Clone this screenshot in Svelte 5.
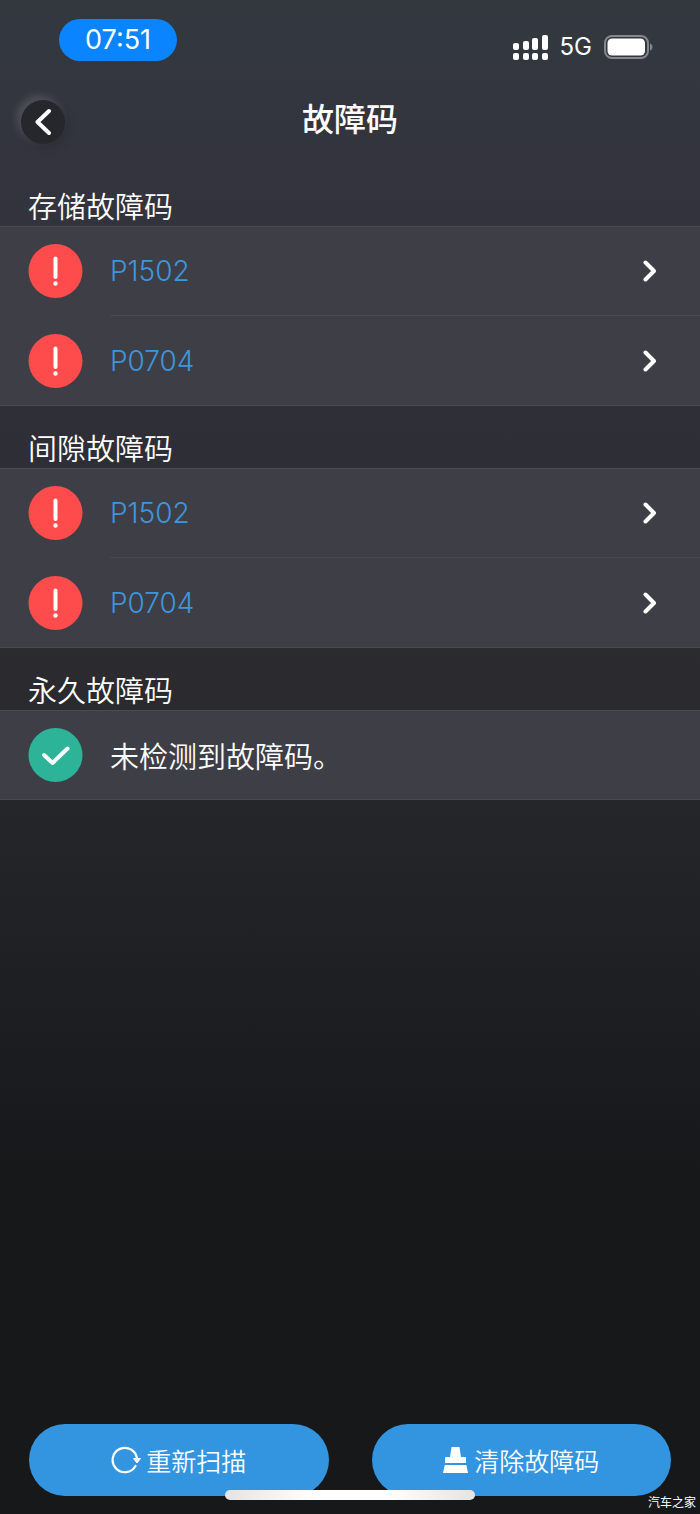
<script>
  const sections = [
    { title: "存储故障码", codes: ["P1502", "P0704"] },
    { title: "间隙故障码", codes: ["P1502", "P0704"] },
    { title: "永久故障码", codes: [] }
  ];

  // dots and bars of the dual SIM signal icon
  const bars = [
    { x: 0, y: 8, height: 7 },
    { x: 10, y: 6, height: 9 },
    { x: 19, y: 3, height: 12 },
    { x: 29, y: 0, height: 15 }
  ];
</script>

<svelte:head>
  <title>故障码</title>
</svelte:head>

<div class="screen">
  <div class="status">
    <span class="time">07:51</span>
    <div class="signals">
      <svg width="35" height="25" viewBox="0 0 35 25" fill="#fff" aria-hidden="true">
        {#each bars as bar}
          <rect x={bar.x} y={bar.y} width="6" height={bar.height} rx="2" />
          <rect x={bar.x} y="18" width="6" height="7" rx="2" />
        {/each}
      </svg>
      <span class="network">5G</span>
      <svg width="49" height="24" viewBox="0 0 49 24" aria-hidden="true">
        <rect x="1" y="1" width="43" height="22" rx="7" fill="none" stroke="#84878c" stroke-width="2" />
        <rect x="3.5" y="3.5" width="37.5" height="17" rx="4.5" fill="#fff" />
        <path d="M46 8.5c3.3 1 3.3 6 0 7z" fill="#84878c" />
      </svg>
    </div>
  </div>

  <header>
    <button class="back" aria-label="返回">
      <svg width="16" height="28" viewBox="0 0 16 28" aria-hidden="true">
        <path d="M14 3L2.500 14 14 25" />
      </svg>
    </button>
    <h1>故障码</h1>
  </header>

  <main>
    {#each sections as section}
      <section>
        <h2>{section.title}</h2>
        <ul>
          {#each section.codes as code}
            <li>
              <button class="row">
                <svg class="state" viewBox="0 0 54 54" aria-hidden="true">
                  <circle cx="27" cy="27" r="27" fill="#fe4c4d" />
                  <path d="M27 14.500V33" stroke="#fff" stroke-width="4" stroke-linecap="round" />
                  <circle cx="27" cy="39.500" r="2.200" fill="#fff" />
                </svg>
                <span class="content">
                  <span class="code">{code}</span>
                  <svg class="arrow" width="14" height="22" viewBox="0 0 14 22" aria-hidden="true">
                    <path d="M2.500 2.500L11 11 2.500 19.500" />
                  </svg>
                </span>
              </button>
            </li>
          {:else}
            <li>
              <div class="row">
                <svg class="state" viewBox="0 0 54 54" aria-hidden="true">
                  <circle cx="27" cy="27" r="27" fill="#2cb398" />
                  <path d="M15.500 27L24 35 39 20.500" fill="none" stroke="#fff" stroke-width="4" stroke-linecap="round" stroke-linejoin="round" />
                </svg>
                <span class="content">未检测到故障码。</span>
              </div>
            </li>
          {/each}
        </ul>
      </section>
    {/each}
  </main>

  <footer>
    <button class="action">
      <svg width="30" height="28" viewBox="0 0 30 28" aria-hidden="true">
        <path d="M24.500 20A12.200 12.200 0 1 1 26 13" fill="none" stroke="#fff" stroke-width="2.200" stroke-linecap="round" />
        <path d="M22.500 12.500h7l-3.500 4.500z" fill="#fff" stroke="#fff" stroke-linejoin="round" />
      </svg>
      重新扫描
    </button>
    <button class="action">
      <svg width="26" height="26" viewBox="0 0 26 26" fill="#fff" aria-hidden="true">
        <path d="M8.500 0h8l1.500 10h4q1 0 1 1v5H2v-5q0-1 1-1h4zM1.800 18h21.600L25 26H0z" />
      </svg>
      清除故障码
    </button>
  </footer>

  <div class="home-bar"></div>
  <span class="mark">汽车之家</span>
</div>

<style>
  :global(body) {
    margin: 0;
    background: #17181a;
  }

  .screen {
    position: relative;
    box-sizing: border-box;
    min-height: 100vh;
    display: flex;
    flex-direction: column;
    background: linear-gradient(#33383f 0%, #33343d 12%, #2e2e36 30%, #2a2a2f 46%, #242529 55%, #1d1e21 67%, #17181a 77%);
    color: #fff;
    font-family: Inter, "Noto Sans CJK SC", sans-serif;
  }

  button {
    border: 0;
    padding: 0;
    font: inherit;
    color: inherit;
    cursor: pointer;
  }

  .status {
    display: flex;
    justify-content: space-between;
    align-items: flex-start;
    padding: 19px 47px 0 59px;
  }

  .time {
    padding: 0 26px;
    border-radius: 21px;
    background: #0a84ff;
    font-size: 27px;
    line-height: 42px;
  }

  .signals {
    display: flex;
    align-items: center;
    gap: 12px;
    padding-top: 14px;
  }

  .network {
    font-size: 24px;
    line-height: 28px;
  }

  header {
    display: grid;
    grid-template-columns: 44px 1fr 44px;
    align-items: center;
    padding: 39px 21px 20px;
  }

  .back {
    display: flex;
    align-items: center;
    justify-content: center;
    width: 44px;
    height: 44px;
    border-radius: 50%;
    background: #25272c;
    box-shadow: -4px -4px 8px #ffffff26, 4px 4px 10px #0000001f;
  }

  .back path,
  .arrow path {
    fill: none;
    stroke: #fff;
    stroke-width: 4;
    stroke-linecap: round;
    stroke-linejoin: round;
  }

  h1 {
    margin: 0;
    padding-bottom: 4px;
    text-align: center;
    font-size: 32px;
    font-weight: 500;
    line-height: 40px;
  }

  h2 {
    margin: 0;
    padding: 27px 28px 1px;
    font-size: 29px;
    font-weight: 350;
    line-height: 34px;
  }

  ul {
    margin: 0;
    padding: 0;
    list-style: none;
    background: #3e3f46;
    box-shadow: inset 0 1px #4a4b52, inset 0 -1px #4a4b52;
  }

  .row {
    display: flex;
    align-items: center;
    width: 100%;
    height: 90px;
    box-sizing: border-box;
    padding-left: 28px;
    background: none;
    text-align: left;
  }

  .state {
    flex: none;
    width: 55px;
    height: 54px;
    margin-right: 27px;
  }

  .content {
    flex: 1;
    display: flex;
    align-items: center;
    justify-content: space-between;
    height: 90px;
    box-sizing: border-box;
    padding-right: 43px;
    font-size: 29px;
    font-weight: 350;
  }

  li:not(:last-child) .content {
    box-shadow: inset 0 -1px #494a51;
  }

  .code {
    color: #3d96dc;
    font-size: 28px;
  }

  footer {
    display: grid;
    grid-template-columns: 1fr 1fr;
    gap: 43px;
    margin-top: auto;
    padding: 24px 29px 18px;
  }

  .action {
    display: flex;
    align-items: center;
    justify-content: center;
    gap: 5px;
    height: 72px;
    border-radius: 36px;
    background: #3395e0;
    font-size: 25px;
    font-weight: 350;
  }

  /* system overlays */
  .home-bar {
    position: absolute;
    bottom: 14px;
    left: 50%;
    width: 250px;
    height: 10px;
    margin-left: -125px;
    border-radius: 5px;
    background: linear-gradient(90deg, #e4e4e4, #fff 35%, #fff 65%, #e4e4e4);
  }

  .mark {
    position: absolute;
    right: 4px;
    bottom: 3px;
    font-size: 12px;
    line-height: 16px;
  }
</style>
